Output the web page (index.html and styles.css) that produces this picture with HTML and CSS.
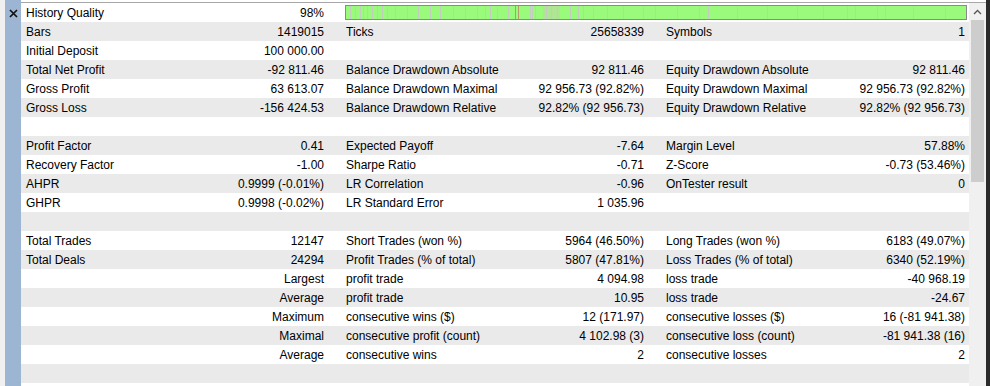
FILE: index.html
```html
<!DOCTYPE html>
<html>
<head>
<meta charset="utf-8">
<link rel="stylesheet" href="styles.css">
</head>
<body>
<div class="gutter"></div>
<div class="side">
  <svg class="close" width="9" height="9" viewBox="0 0 9 9"><path d="M1 1L8 8M8 1L1 8" stroke="#111" stroke-width="1.7" fill="none"/></svg>
</div>
<div class="panel">
  <div class="main">
    <div class="row"><span class="lbl">History Quality</span><span class="val">98%</span>
      <div class="bar">
        <svg width="100%" height="100%" viewBox="0 0 620 13" preserveAspectRatio="none">
          <rect x="197" y="0" width="17" height="13" fill="#aee693"/>
          <g fill="#c3cdbf">
            <rect x="4" width="1" height="13"/><rect x="9" width="1" height="13"/><rect x="14" width="1" height="13"/>
            <rect x="17" width="1" height="13"/><rect x="21" width="1" height="13"/><rect x="26" width="1" height="13"/>
            <rect x="31" width="1" height="13"/><rect x="36" width="1" height="13"/><rect x="41" width="1" height="13"/>
            <rect x="49" width="1" height="13"/><rect x="61" width="1" height="13"/><rect x="72" width="1" height="13"/>
            <rect x="84" width="1" height="13"/><rect x="94" width="1" height="13"/><rect x="107" width="1" height="13"/>
            <rect x="119" width="1" height="13"/><rect x="131" width="1" height="13"/><rect x="139" width="1" height="13"/>
            <rect x="144" width="1" height="13"/><rect x="151" width="1" height="13"/><rect x="162" width="1" height="13"/>
            <rect x="184" width="1" height="13"/><rect x="186" width="1" height="13"/><rect x="189" width="1" height="13"/>
            <rect x="200" width="1" height="13"/><rect x="205" width="1" height="13"/><rect x="211" width="1" height="13"/>
            <rect x="224" width="1" height="13"/><rect x="232" width="1" height="13"/><rect x="237" width="1" height="13"/>
            <rect x="247" width="1" height="13"/><rect x="261" width="1" height="13"/><rect x="277" width="1" height="13"/>
            <rect x="297" width="1" height="13"/><rect x="309" width="1" height="13"/><rect x="331" width="1" height="13"/>
            <rect x="353" width="1" height="13"/><rect x="362" width="1" height="13"/><rect x="391" width="1" height="13"/>
            <rect x="421" width="1" height="13"/><rect x="451" width="1" height="13"/><rect x="477" width="1" height="13"/>
            <rect x="501" width="1" height="13"/><rect x="509" width="1" height="13"/><rect x="531" width="1" height="13"/>
            <rect x="539" width="1" height="13"/><rect x="567" width="1" height="13"/><rect x="599" width="1" height="13"/>
          </g>
          <g fill="#b69a6e">
            <rect x="169" width="1" height="13"/><rect x="172" width="1" height="13"/>
          </g>
        </svg>
      </div>
    </div>
    <div class="row"><span class="lbl">Bars</span><span class="val">1419015</span><span class="lbl">Ticks</span><span class="val">25658339</span><span class="lbl">Symbols</span><span class="val">1</span></div>
    <div class="row"><span class="lbl">Initial Deposit</span><span class="val">100 000.00</span><span class="lbl"></span><span class="val"></span><span class="lbl"></span><span class="val"></span></div>
    <div class="row"><span class="lbl">Total Net Profit</span><span class="val">-92 811.46</span><span class="lbl">Balance Drawdown Absolute</span><span class="val">92 811.46</span><span class="lbl">Equity Drawdown Absolute</span><span class="val">92 811.46</span></div>
    <div class="row"><span class="lbl">Gross Profit</span><span class="val">63 613.07</span><span class="lbl">Balance Drawdown Maximal</span><span class="val">92 956.73 (92.82%)</span><span class="lbl">Equity Drawdown Maximal</span><span class="val">92 956.73 (92.82%)</span></div>
    <div class="row"><span class="lbl">Gross Loss</span><span class="val">-156 424.53</span><span class="lbl">Balance Drawdown Relative</span><span class="val">92.82% (92 956.73)</span><span class="lbl">Equity Drawdown Relative</span><span class="val">92.82% (92 956.73)</span></div>
    <div class="row"></div>
    <div class="row"><span class="lbl">Profit Factor</span><span class="val">0.41</span><span class="lbl">Expected Payoff</span><span class="val">-7.64</span><span class="lbl">Margin Level</span><span class="val">57.88%</span></div>
    <div class="row"><span class="lbl">Recovery Factor</span><span class="val">-1.00</span><span class="lbl">Sharpe Ratio</span><span class="val">-0.71</span><span class="lbl">Z-Score</span><span class="val">-0.73 (53.46%)</span></div>
    <div class="row"><span class="lbl">AHPR</span><span class="val">0.9999 (-0.01%)</span><span class="lbl">LR Correlation</span><span class="val">-0.96</span><span class="lbl">OnTester result</span><span class="val">0</span></div>
    <div class="row"><span class="lbl">GHPR</span><span class="val">0.9998 (-0.02%)</span><span class="lbl">LR Standard Error</span><span class="val">1 035.96</span><span class="lbl"></span><span class="val"></span></div>
    <div class="row"></div>
    <div class="row"><span class="lbl">Total Trades</span><span class="val">12147</span><span class="lbl">Short Trades (won %)</span><span class="val">5964 (46.50%)</span><span class="lbl">Long Trades (won %)</span><span class="val">6183 (49.07%)</span></div>
    <div class="row"><span class="lbl">Total Deals</span><span class="val">24294</span><span class="lbl">Profit Trades (% of total)</span><span class="val">5807 (47.81%)</span><span class="lbl">Loss Trades (% of total)</span><span class="val">6340 (52.19%)</span></div>
    <div class="row"><span class="lbl"></span><span class="val">Largest</span><span class="lbl">profit trade</span><span class="val">4 094.98</span><span class="lbl">loss trade</span><span class="val">-40 968.19</span></div>
    <div class="row"><span class="lbl"></span><span class="val">Average</span><span class="lbl">profit trade</span><span class="val">10.95</span><span class="lbl">loss trade</span><span class="val">-24.67</span></div>
    <div class="row"><span class="lbl"></span><span class="val">Maximum</span><span class="lbl">consecutive wins ($)</span><span class="val">12 (171.97)</span><span class="lbl">consecutive losses ($)</span><span class="val">16 (-81 941.38)</span></div>
    <div class="row"><span class="lbl"></span><span class="val">Maximal</span><span class="lbl">consecutive profit (count)</span><span class="val">4 102.98 (3)</span><span class="lbl">consecutive loss (count)</span><span class="val">-81 941.38 (16)</span></div>
    <div class="row"><span class="lbl"></span><span class="val">Average</span><span class="lbl">consecutive wins</span><span class="val">2</span><span class="lbl">consecutive losses</span><span class="val">2</span></div>
    <div class="row"></div>
  </div>
  <div class="scrollbar">
    <div class="arrow">
      <svg width="9" height="6" viewBox="0 0 9 6"><path d="M1 5L4.5 1.5L8 5" stroke="#555" stroke-width="1.3" fill="none"/></svg>
    </div>
    <div class="thumb"></div>
  </div>
</div>
<div class="dark"></div>
</body>
</html>
```
FILE: styles.css
```css
html, body {
  margin: 0;
  padding: 0;
}
body {
  width: 990px;
  height: 386px;
  overflow: hidden;
  display: flex;
  background: #ffffff;
  font-family: "Liberation Sans", Arial, sans-serif;
  font-size: 12px;
  color: #000;
}
.gutter {
  width: 5px;
  background: #f0f0f0;
}
.side {
  width: 16px;
  background: #9bb5d3;
  display: flex;
  justify-content: center;
  align-items: flex-start;
}
.close {
  margin-top: 9px;
}
.panel {
  width: 965px;
  margin-top: 2px;
  border-top: 1px solid #a8a8a8;
  display: flex;
  align-self: flex-start;
  height: 383px;
}
.main {
  width: 948px;
  display: flex;
  flex-direction: column;
}
.row {
  box-sizing: border-box;
  height: 19px;
  padding-top: 2px;
  line-height: 17px;
  display: grid;
  grid-template-columns: 159px 148px 172px 148px 172px 149px;
  align-items: start;
  white-space: nowrap;
  background: #ffffff;
}
.row:nth-child(even) {
  background: #eaeaea;
}
.lbl {
  padding-left: 5px;
}
.lbl:nth-child(3), .lbl:nth-child(5) {
  padding-left: 18px;
}
.val {
  text-align: right;
  padding-right: 4px;
}
.bar {
  grid-column: 3 / 7;
  margin: 0 2px 0 17px;
  height: 13px;
  border: 1px solid #8a8a8a;
  background: #9afa7c;
  line-height: 0;
}
.bar svg {
  display: block;
}
.scrollbar {
  width: 17px;
  background: #f0f0f0;
  display: flex;
  flex-direction: column;
}
.arrow {
  height: 17px;
  display: flex;
  justify-content: center;
  align-items: center;
}
.thumb {
  height: 162px;
  margin: 0 2px;
  background: #cdcdcd;
}
.dark {
  flex: 1;
  background: #2b2b2b;
}
```
